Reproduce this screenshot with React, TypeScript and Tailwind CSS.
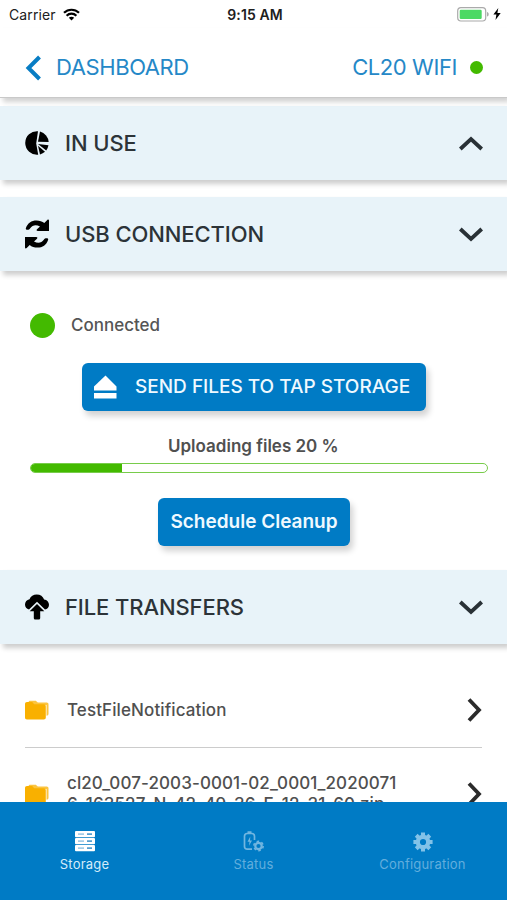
import type { ReactNode } from "react";

interface SectionBarProps {
  title: string;
  icon: ReactNode;
  open?: boolean;
  titleClass: string;
}

function SectionBar({ title, icon, open, titleClass }: SectionBarProps) {
  return (
    <button className="flex h-[74px] w-full shrink-0 items-center bg-[#e8f3f9] pl-[25px] pr-[24px] text-left shadow-[3px_4px_5px_rgba(0,0,0,0.2)]">
      <span className="flex w-10 shrink-0 items-center">{icon}</span>
      <span className={`flex-1 whitespace-nowrap text-[22px] font-medium leading-7 text-[#2c3338] ${titleClass}`}>{title}</span>
      <svg className={open ? "rotate-180" : ""} width="24" height="15" viewBox="0 0 24 15" fill="none">
        <path d="M1.3 2 12 12 22.7 2" stroke="#293136" strokeWidth="3.8" />
      </svg>
    </button>
  );
}

function PieIcon() {
  return (
    <svg width="24" height="24" viewBox="0 0 24 24" fill="black">
      <path d="M13 .2A11.8 11.8 0 1 0 13.2 23.7L11.2 12.6Z" />
      <path d="M15 .5A11.8 11.8 0 0 1 23.7 11.1L13 10.8Z" />
      <path d="M13 13 23.5 14.3A11.8 11.8 0 0 1 21.2 19.5Z" />
      <path d="M13 14.8 20 20.8A11.8 11.8 0 0 1 15 23.4Z" />
    </svg>
  );
}

function SyncIcon() {
  return (
    <svg width="24" height="30" viewBox="0 0 24 30" fill="black">
      <path d="M.8 9.5C2.5 3.8 6.5 1.4 11.5 1.4c3.2 0 5.8 1 7.8 2.7L22.3.9c.8-.8 1.7-.4 1.7.6v10.4H12.8c-1.2 0-1.6-.9-.8-1.7l3-2.7C11 5.5 7.5 6 5.2 9.3c-.8 1.2-1.5 1.5-2.6 1.5-1.2 0-2-.3-1.8-1.3Z" />
      <path transform="rotate(180 12 15)" d="M.8 9.5C2.5 3.8 6.5 1.4 11.5 1.4c3.2 0 5.8 1 7.8 2.7L22.3.9c.8-.8 1.7-.4 1.7.6v10.4H12.8c-1.2 0-1.6-.9-.8-1.7l3-2.7C11 5.5 7.5 6 5.2 9.3c-.8 1.2-1.5 1.5-2.6 1.5-1.2 0-2-.3-1.8-1.3Z" />
    </svg>
  );
}

function CloudIcon() {
  return (
    <svg width="24" height="26" viewBox="0 0 24 26" fill="black">
      <path d="M4.5 5.2C5.5 2 8.5.4 11.7.4c3.6 0 6.4 1.9 7.4 5C22 5.8 24 8 24 10.7c0 2.5-1.6 4.3-4 4.8L12 7.8 4 15.5C1.5 15 0 13.1 0 10.6 0 7.8 1.8 5.8 4.5 5.2Z" />
      <path d="m12 10 7.3 7.2h-4.1v6.7c0 .9-.5 1.5-1.4 1.5h-3.6c-.9 0-1.4-.6-1.4-1.5v-6.7H4.7Z" />
    </svg>
  );
}

function FolderIcon() {
  return (
    <svg width="24" height="20" viewBox="0 0 24 20" fill="#f9b000">
      <path d="M3.5 2.5C3.5 1.3 4.2.7 5.3.7h5.5l2 1.7h8.9c1.1 0 1.8.8 1.8 1.8v9.6c0 1.3-.7 2-2 2V5.1H3.5Z" opacity=".75" />
      <path d="M0 4c0-1.3.8-2 2-2h5.2l2 2.2h9.6c1.3 0 2 .7 2 2v11.3c0 1.3-.7 2-2 2H2c-1.3 0-2-.7-2-2Z" />
    </svg>
  );
}

function RowArrow() {
  return (
    <svg width="15" height="26" viewBox="0 0 15 26" fill="none">
      <path d="M2 2.5 12 13 2 23.5" stroke="#2b2b2b" strokeWidth="3.8" />
    </svg>
  );
}

function StatusBar() {
  return (
    <div className="flex h-7 shrink-0 items-center pl-[9px] pr-[6px] text-[14px] text-[#202020]">
      <div className="flex flex-1 items-center gap-[7px]">
        <span className="tracking-[0.1px]">Carrier</span>
        <svg width="17" height="13" viewBox="0 0 17 13" fill="none" stroke="black" strokeWidth="2.2">
          <path d="M1 4.8C5.2.7 11.8.7 16 4.8M3.6 7.7c2.8-2.7 7-2.7 9.8 0" />
          <path d="m5.8 9.8 2.7 2.8 2.7-2.8c-1.5-1.3-3.9-1.3-5.4 0Z" fill="black" stroke="none" />
        </svg>
      </div>
      <span className="font-semibold tracking-[0.1px]">9:15 AM</span>
      <div className="flex flex-1 items-center justify-end gap-[4px]">
        <svg width="32" height="15" viewBox="0 0 32 15">
          <rect x=".7" y=".7" width="28" height="13.3" rx="3.2" fill="white" stroke="#aaa" strokeWidth="1.2" />
          <rect x="2.7" y="2.7" width="22" height="9.3" rx="1.2" fill="#4cd964" />
          <path d="M30 5v4.6c1.2-.4 1.7-1.2 1.7-2.3S31.200 5.400 30 5Z" fill="#aaa" />
        </svg>
        <svg width="8" height="12" viewBox="0 0 8 12" fill="black">
          <path d="M5.300 0 .4 6.500h3L2.500 12 7.700 5H4.400Z" />
        </svg>
      </div>
    </div>
  );
}

function StorageIcon() {
  return (
    <svg width="20" height="21" viewBox="0 0 20 21">
      {[0, 7, 14].map((y) => (
        <g key={y}>
          <rect y={y} width="20" height="6.200" rx="1" fill="white" />
          <path d={`M3 ${y + 3.1}h6`} stroke="#8fc1e2" strokeWidth="1.400" />
          <path d={`M12 ${y + 3.1}h5`} stroke="#2b87c4" strokeWidth="1.400" />
        </g>
      ))}
    </svg>
  );
}

function StatusIcon() {
  return (
    <svg width="21" height="21" viewBox="0 0 21 21" fill="none" stroke="#72b6e0">
      <path d="M9 18.200H4.200C2.500 18.200 1.500 17.200 1.500 15.500V5.200c0-1.700 1-2.700 2.700-2.700h4.600c1.700 0 2.700 1 2.700 2.700V9M4.500 1.200h4" strokeWidth="1.700" />
      <path d="M7.300 5.500 4.500 10.700h2l-.5 4 3-5.200H7Z" fill="#72b6e0" stroke="none" />
      <circle cx="15.500" cy="15" r="3.200" strokeWidth="2.200" />
      <circle cx="15.500" cy="15" r="4.700" strokeWidth="1.500" strokeDasharray="2.500 2.420" />
    </svg>
  );
}

function GearIcon() {
  return (
    <svg width="20" height="20" viewBox="0 0 20 20" fill="none" stroke="#82c2e8">
      <circle cx="10" cy="10" r="5.200" strokeWidth="4.200" />
      {[0, 45, 90, 135].map((angle) => (
        <path key={angle} transform={`rotate(${angle} 10 10)`} d="M10 .4v3.200M10 16.400v3.200" strokeWidth="4" strokeLinecap="butt" />
      ))}
    </svg>
  );
}

export default function App() {
  const progress = 20;

  const files = [
    { name: ["TestFileNotification"], tracking: "tracking-[0.1px]", height: "h-[75px]" },
    { name: ["cl20_007-2003-0001-02_0001_2020071", "6-163527-N-42-49-36-E-12-31-60.zip"], tracking: "tracking-[0.1px]", height: "h-[92px]" }
  ];

  const tabs = [
    { label: "Storage", icon: <StorageIcon />, color: "text-[#d4ecfa]" },
    { label: "Status", icon: <StatusIcon />, color: "text-[#62aedd]" },
    { label: "Configuration", icon: <GearIcon />, color: "text-[#62aedd]" }
  ];

  return (
    <div className="flex h-[900px] w-[507px] flex-col overflow-hidden bg-white font-['Inter',sans-serif]">
      <StatusBar />

      {/* Header */}
      <header className="z-10 flex h-[70px] shrink-0 items-center border-b border-[#c9c9c9] bg-white pb-[-1px] pl-[25px] pr-[24px] pt-[10px] text-[22px] text-[#2588c7] shadow-[3px_4px_5px_rgba(0,0,0,0.18)]">
        <svg width="18" height="26" viewBox="0 0 18 26" fill="none">
          <path d="M14.500 2 3.500 13l11 11" stroke="#087dc4" strokeWidth="4" />
        </svg>
        <span className="ml-[13px] flex-1 tracking-[-0.4px]">DASHBOARD</span>
        <span className="tracking-[-0.4px]">CL20 WIFI</span>
        <span className="ml-[13px] h-[13px] w-[13px] rounded-full bg-[#43ba00]" />
      </header>

      <main className="flex min-h-0 flex-1 flex-col overflow-hidden pt-2">
        <SectionBar title="IN USE" icon={<PieIcon />} open titleClass="tracking-[-0.1px]" />
        <div className="h-[17px] shrink-0" />
        <SectionBar title="USB CONNECTION" icon={<SyncIcon />} titleClass="tracking-[-0.1px]" />

        {/* USB status and uploads */}
        <section className="flex h-[299px] shrink-0 flex-col items-center pl-[30px] pr-[19px] pt-[42px]">
          <div className="flex h-[25px] w-full items-center gap-4">
            <span className="h-[25px] w-[25px] rounded-full bg-[#43ba00]" />
            <span className="text-[17px] font-medium text-[#555]">Connected</span>
          </div>
          <button className="mt-[25px] flex h-[48px] w-[344px] shrink-0 items-center self-start rounded-[6px] bg-[#007bc5] pl-3 text-[19px] font-medium text-[#eff9ff] shadow-[3px_5px_6px_rgba(0,0,0,0.18)] ml-[52px]">
            <svg width="23" height="24" viewBox="0 0 23 24" fill="white">
              <path d="M11.500.5 22.500 11.500v4H0v-4Z" />
              <path d="M0 18h22.500v5.500H0Z" />
            </svg>
            <span className="ml-[18px] whitespace-nowrap">SEND FILES TO TAP STORAGE</span>
          </button>
          <p className="mt-[23px] h-6 self-start pl-[138px] text-[17px] font-semibold leading-6 text-[#505050]">Uploading files {progress} %</p>
          <div className="mt-[5px] h-[10px] w-full shrink-0 overflow-hidden rounded-full border-[1.500px] border-[#78cc4b]">
            <div className="h-full bg-[#43ba00]" style={{ width: `${progress}%` }} />
          </div>
          <button className="ml-[128px] mt-[25px] flex h-[48px] w-[192px] shrink-0 items-center justify-center self-start rounded-[6px] bg-[#007bc5] text-[19px] font-semibold text-[#eff9ff] shadow-[3px_5px_6px_rgba(0,0,0,0.18)]">
            Schedule Cleanup
          </button>
        </section>

        <SectionBar title="FILE TRANSFERS" icon={<CloudIcon />} titleClass="tracking-[-0.1px]" />

        {/* Files */}
        <ul className="mx-[25px] mt-[29px]">
          {files.map((file) => (
            <li key={file.name[0]} className={`flex items-center border-b border-[#ccc] ${file.height}`}>
              <FolderIcon />
              <div className="ml-[18px] flex-1 whitespace-nowrap text-[17px] font-medium leading-[21px] text-[#505050]">
                {file.name.map((line) => (
                  <div key={line} className={file.tracking}>{line}</div>
                ))}
              </div>
              <RowArrow />
            </li>
          ))}
        </ul>
      </main>

      {/* Tab bar */}
      <nav className="z-10 grid h-[98px] shrink-0 grid-cols-3 bg-[#007bc5] pt-[29px]">
        {tabs.map((tab) => (
          <button key={tab.label} className={`flex flex-col items-center justify-start gap-[4px] text-[13px] ${tab.color}`}>
            <span className="flex h-[21px] items-center">{tab.icon}</span>
            <span className="leading-4 tracking-[0.2px]">{tab.label}</span>
          </button>
        ))}
      </nav>
    </div>
  );
}
